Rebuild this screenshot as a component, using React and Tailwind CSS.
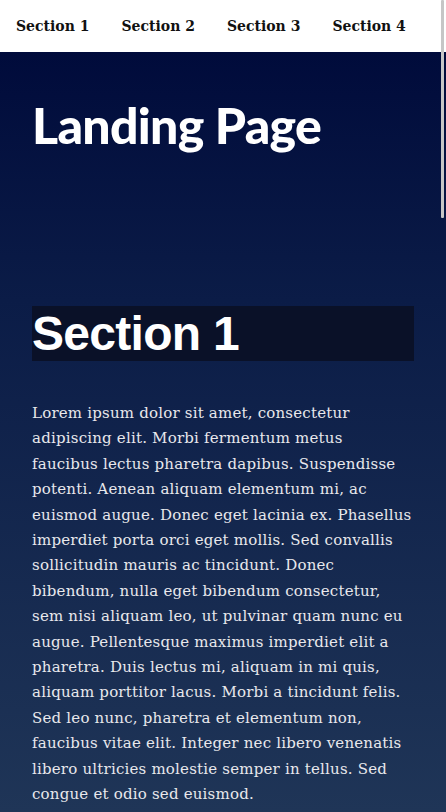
import React from "react";

const lines = [
  "Lorem ipsum dolor sit amet, consectetur",
  "adipiscing elit. Morbi fermentum metus",
  "faucibus lectus pharetra dapibus. Suspendisse",
  "potenti. Aenean aliquam elementum mi, ac",
  "euismod augue. Donec eget lacinia ex. Phasellus",
  "imperdiet porta orci eget mollis. Sed convallis",
  "sollicitudin mauris ac tincidunt. Donec",
  "bibendum, nulla eget bibendum consectetur,",
  "sem nisi aliquam leo, ut pulvinar quam nunc eu",
  "augue. Pellentesque maximus imperdiet elit a",
  "pharetra. Duis lectus mi, aliquam in mi quis,",
  "aliquam porttitor lacus. Morbi a tincidunt felis.",
  "Sed leo nunc, pharetra et elementum non,",
  "faucibus vitae elit. Integer nec libero venenatis",
  "libero ultricies molestie semper in tellus. Sed",
  "congue et odio sed euismod.",
];

function Section({ title }) {
  return (
    <section className="px-8 pt-[46px]">
      <h2 className="bg-[#0a1128] text-white font-bold text-[48px] leading-[55px] tracking-[-0.7px] font-['Liberation_Sans',Arial,sans-serif]">
        {title}
      </h2>
      <p className="mt-10 text-[#e8e8ec] text-[15px] leading-[25.4px] tracking-[0.2px] font-['DejaVu_Serif',serif]">
        {lines.map((l, i) => (
          <span key={i} className="block whitespace-nowrap">
            {l}
          </span>
        ))}
      </p>
    </section>
  );
}

export default function App() {
  return (
    <div className="relative h-[812px] overflow-hidden bg-[linear-gradient(to_bottom,#ffffff_0px,#ffffff_52px,#000b3b_52px,#0b1c47_300px,#1f3557_812px)]">
      <nav className="h-[52px] bg-white flex items-center gap-8 px-4 font-['DejaVu_Serif',serif] font-bold text-[14px] text-[#111]">
        <a>Section 1</a>
        <a>Section 2</a>
        <a>Section 3</a>
        <a>Section 4</a>
      </nav>
      <header className="px-8 pt-[43px] h-[208px]">
        <h1 className="text-white font-black text-[50px] leading-[60px] tracking-[-0.7px] font-['Lato',sans-serif]">
          Landing Page
        </h1>
      </header>
      <Section title="Section 1" />
      <div className="absolute right-[2px] top-0 w-[3px] h-[218px] bg-[#c6c6c6] rounded-[1px]" aria-hidden="true" />
    </div>
  );
}
